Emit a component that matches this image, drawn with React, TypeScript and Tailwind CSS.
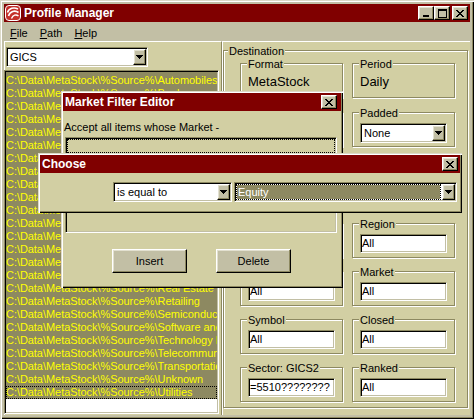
import React from "react";

const raised =
  "border border-t-white border-l-white border-r-black border-b-black shadow-[inset_-1px_-1px_0_#8d8961,inset_1px_1px_0_#e2e0d0]";
const sunken =
  "border border-t-[#8d8961] border-l-[#8d8961] border-r-white border-b-white shadow-[inset_1px_1px_0_#000,inset_-1px_-1px_0_#c2bfa5]";
const frame =
  "shadow-[inset_1px_1px_0_#dcdac8,inset_2px_2px_0_#fff,inset_-1px_-1px_0_#000,inset_-2px_-2px_0_#8d8961]";

const items = [
  "Automobiles",
  "Banks",
  "Capital Goods",
  "Commercial Services",
  "Consumer Durables",
  "Consumer Services",
  "Diversified Financials",
  "Energy",
  "Food & Staples Retailing",
  "Food Beverage & Tobacco",
  "Health Care",
  "Household Products",
  "Insurance",
  "Materials",
  "Media",
  "Pharmaceuticals",
  "Real Estate",
  "Retailing",
  "Semiconductors",
  "Software and Services",
  "Technology Hardware",
  "Telecommunication Services",
  "Transportation",
  "Unknown",
  "Utilities",
];

function CloseGlyph() {
  return (
    <svg width="8" height="7" viewBox="0 0 8 7" shapeRendering="crispEdges">
      <path
        fill="#000"
        d="M0 0h2v1H0z M6 0h2v1H6z M1 1h2v1H1z M5 1h2v1H5z M2 2h4v1H2z M3 3h2v1H3z M2 4h4v1H2z M1 5h2v1H1z M5 5h2v1H5z M0 6h2v1H0z M6 6h2v1H6z"
      />
    </svg>
  );
}

function TitleBtn({ kind }: { kind: "min" | "max" | "close" }) {
  return (
    <div
      className={
        "w-[16px] h-[14px] bg-[#c2bfa5] flex items-center justify-center " +
        raised
      }
    >
      {kind === "close" && <CloseGlyph />}
      {kind === "min" && (
        <svg width="8" height="7" viewBox="0 0 8 7" shapeRendering="crispEdges">
          <path fill="#000" d="M1 5h6v2H1z" />
        </svg>
      )}
      {kind === "max" && (
        <svg width="9" height="9" viewBox="0 0 9 9" shapeRendering="crispEdges">
          <path fill="#000" d="M0 0h9v2H0z M0 2h1v7H0z M8 2h1v7H8z M0 8h9v1H0z" />
        </svg>
      )}
    </div>
  );
}

function Arrow() {
  return (
    <svg width="7" height="4" viewBox="0 0 7 4" shapeRendering="crispEdges">
      <path fill="#000" d="M0 0h7v1H0z M1 1h5v1H1z M2 2h3v1H2z M3 3h1v1H3z" />
    </svg>
  );
}

function Combo({
  w,
  text,
  sel,
}: {
  w: string;
  text: string;
  sel?: boolean;
}) {
  return (
    <div className={"flex h-[20px] bg-white p-[1px] " + w + " " + sunken}>
      {sel ? (
        <div className="flex-1 mr-[1px] bg-[#8d8961] text-white border border-white [outline:1px_dotted_#000] [outline-offset:-1px] text-[11px] leading-[14px] pl-[1px]">
          {text}
        </div>
      ) : (
        <div className="flex-1 text-[11px] leading-[16px] pl-[2px]">{text}</div>
      )}
      <div
        className={
          "w-[13px] h-[16px] bg-[#c2bfa5] flex items-center justify-center " +
          raised
        }
      >
        <Arrow />
      </div>
    </div>
  );
}

function Group({
  label,
  children,
}: {
  label?: string;
  children?: React.ReactNode;
}) {
  return (
    <div className="relative h-[35px] w-[103px] border border-[#8d8961] shadow-[inset_1px_1px_0_#fff,1px_1px_0_#fff]">
      {label && (
        <span className="absolute left-[6px] top-[-7px] bg-[#d2cfa3] px-[1px] text-[11px] leading-[14px] whitespace-nowrap">
          {label}
        </span>
      )}
      {children}
    </div>
  );
}

function TextBox({ value }: { value?: string }) {
  return (
    <div
      className={
        "ml-[7px] mt-[10px] w-[87px] h-[19px] bg-white text-[11px] leading-[17px] pl-[1px] whitespace-nowrap overflow-hidden " +
        sunken
      }
    >
      {value}
    </div>
  );
}

function Button({ label }: { label: string }) {
  return (
    <div
      className={
        "w-[75px] h-[24px] bg-[#c2bfa5] flex items-center justify-center text-[11px] " +
        raised
      }
    >
      {label}
    </div>
  );
}

export default function App() {
  return (
    <div
      className={
        "relative w-[474px] h-[419px] overflow-hidden bg-[#c2bfa5] p-[4px] text-black [font-family:'Liberation_Sans',Arial,sans-serif] " +
        frame
      }
    >
      {/* Title bar */}
      <div className="h-[18px] bg-[#800000] flex items-center pl-[1px] pr-[2px]">
        <svg width="16" height="16" viewBox="0 0 16 16">
          <rect x="0.5" y="0.5" width="15" height="15" rx="3.5" fill="#c4312b" stroke="#fff" />
          <path d="M2.5 7.5 C4 3 9 2 13 4" stroke="#fff" strokeWidth="1.6" fill="none" />
          <path d="M3.5 11 C5 6 10 5 13.5 7.5" stroke="#fff" strokeWidth="1.6" fill="none" />
          <path d="M6.5 13.5 C8 10 11 9 13.5 11" stroke="#fff" strokeWidth="1.4" fill="none" />
        </svg>
        <span className="ml-[3px] text-white font-bold text-[12px] leading-none">
          Profile Manager
        </span>
        <div className="ml-auto flex">
          <TitleBtn kind="min" />
          <TitleBtn kind="max" />
          <div className="w-[2px]" />
          <TitleBtn kind="close" />
        </div>
      </div>

      {/* Menu bar */}
      <div className="h-[19px] flex pt-[4px] text-[11px] leading-[14px]">
        <span className="px-[6px]">
          <span className="underline">F</span>ile
        </span>
        <span className="px-[6px]">
          <span className="underline">P</span>ath
        </span>
        <span className="px-[6px]">
          <span className="underline">H</span>elp
        </span>
      </div>

      {/* Client */}
      <div className="flex h-[374px] bg-[#d2cfa3]">
        {/* Left panel */}
        <div className="w-[218px] border-t border-l border-r border-t-white border-l-white border-r-[#8d8961] flex flex-col">
          <div className="ml-[1px] mt-[5px]">
            <Combo w="w-[142px]" text="GICS" />
          </div>
          <div
            className={
              "mt-[3px] -ml-[1px] w-[215px] h-[344px] bg-white overflow-hidden p-[1px] " +
              sunken
            }
          >
            <div className="bg-[#8d8961] pt-[2px] text-[#ffff00] text-[11px] leading-[13px] tracking-[-0.05px] whitespace-nowrap overflow-hidden">
              {items.map((it, i) => (
                <div
                  key={it}
                  className={
                    "h-[13px] " +
                    (i === items.length - 1
                      ? "[outline:1px_dotted_#000] [outline-offset:-1px]"
                      : "")
                  }
                >
                  {"C:\\Data\\MetaStock\\%Source%\\" + it}
                </div>
              ))}
            </div>
          </div>
        </div>

        {/* Right panel */}
        <div className="flex-1 border-t border-l border-t-white border-l-white">
          <div className="relative mt-[8px] w-[245px] h-[358px] border border-[#8d8961] shadow-[inset_1px_1px_0_#fff,1px_1px_0_#fff] pl-[16px]">
            <span className="absolute left-[4px] top-[-7px] bg-[#d2cfa3] px-[1px] text-[11px] leading-[14px]">
              Destination
            </span>
            <div className="flex gap-[9px] mt-[12px]">
              <Group label="Format">
                <div className="mt-[10px] pl-[7px] text-[13px] leading-[16px]">MetaStock</div>
              </Group>
              <Group label="Period">
                <div className="mt-[10px] pl-[7px] text-[13px] leading-[16px]">Daily</div>
              </Group>
            </div>
            <div className="flex gap-[9px] mt-[14px]">
              <Group>
                <TextBox />
              </Group>
              <Group label="Padded">
                <div className="ml-[7px] mt-[10px]">
                  <Combo w="w-[87px]" text="None" />
                </div>
              </Group>
            </div>
            <div className="flex gap-[9px] mt-[13px]">
              <Group>
                <TextBox />
              </Group>
              <Group>
                <TextBox />
              </Group>
            </div>
            <div className="flex gap-[9px] mt-[28px]">
              <Group>
                <TextBox />
              </Group>
              <Group label="Region">
                <TextBox value="All" />
              </Group>
            </div>
            <div className="flex gap-[9px] mt-[13px]">
              <Group>
                <TextBox value="All" />
              </Group>
              <Group label="Market">
                <TextBox value="All" />
              </Group>
            </div>
            <div className="flex gap-[9px] mt-[13px]">
              <Group label="Symbol">
                <TextBox value="All" />
              </Group>
              <Group label="Closed">
                <TextBox value="All" />
              </Group>
            </div>
            <div className="flex gap-[9px] mt-[13px]">
              <Group label="Sector: GICS2">
                <TextBox value="=5510????????" />
              </Group>
              <Group label="Ranked">
                <TextBox value="All" />
              </Group>
            </div>
          </div>
        </div>
      </div>

      {/* Market Filter Editor dialog */}
      <div
        className={
          "absolute left-[61px] top-[91px] w-[282px] h-[197px] bg-[#d2cfa3] p-[2px] " +
          frame
        }
      >
        <div className="h-[18px] bg-[#800000] flex items-center pl-[2px] pr-[4px]">
          <span className="text-white font-bold text-[12px] leading-none">
            Market Filter Editor
          </span>
          <div className="ml-auto">
            <TitleBtn kind="close" />
          </div>
        </div>
        <div className="mt-[9px] pl-[1px] text-[11px] leading-[14px]">
          Accept all items whose Market -
        </div>
        <div className={"mt-[3px] ml-[2px] w-[272px] h-[96px] p-[1px] " + sunken}>
          <div className="h-[14px] border border-dotted border-black" />
        </div>
        <div className="flex mt-[16px] ml-[49px] gap-[29px]">
          <Button label="Insert" />
          <Button label="Delete" />
        </div>
      </div>

      {/* Choose dialog */}
      <div
        className={
          "absolute left-[38px] top-[153px] w-[424px] h-[60px] bg-[#d2cfa3] p-[2px] " +
          frame
        }
      >
        <div className="h-[18px] bg-[#800000] flex items-center pl-[2px] pr-[2px]">
          <span className="text-white font-bold text-[12px] leading-none">Choose</span>
          <div className="ml-auto">
            <TitleBtn kind="close" />
          </div>
        </div>
        <div className="flex mt-[9px] ml-[73px] gap-[2px]">
          <Combo w="w-[119px]" text="is equal to" />
          <Combo w="w-[223px]" text="Equity" sel />
        </div>
      </div>
    </div>
  );
}
